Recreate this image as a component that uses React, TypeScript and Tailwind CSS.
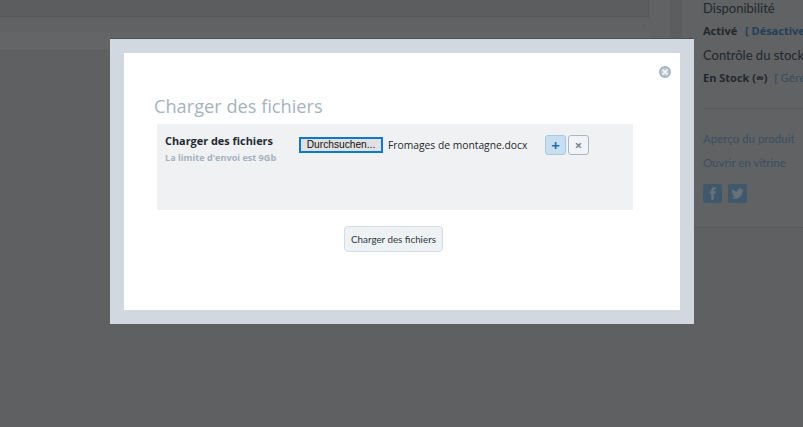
import React from 'react';

const sans = "font-['Open_Sans','Liberation_Sans',sans-serif]";
const narrow = "font-['Lato','Liberation_Sans',sans-serif]";

const ProductSide = () => (
  <aside className="flex h-[228px] w-[121px] flex-col overflow-hidden border-b border-dotted border-[#505254] bg-[#606264] pl-[21px] text-[#23282c]">
    <h4 className={`mt-[-1px] whitespace-nowrap text-[13px] leading-[19px] ${narrow}`}>Disponibilité</h4>
    <p className="mt-[5px] whitespace-nowrap text-[11px] font-bold leading-[16px]">
      Activé <span className="ml-[5px] text-[#243f57]">[ Désactiver ]</span>
    </p>
    <h4 className={`mt-[7px] whitespace-nowrap text-[13px] leading-[19px] ${narrow}`}>Contrôle du stock</h4>
    <p className="mt-[5px] whitespace-nowrap text-[11px] font-bold leading-[16px]">
      En Stock (∞) <span className="ml-[4px] font-normal text-[#2f4a61]">[ Gérer ]</span>
    </p>
    <div className="mt-[22px] border-t border-[#575a5c]" />
    <a className={`mt-[22px] whitespace-nowrap text-[11.500px] leading-[16px] text-[#3a5062] ${narrow}`}>Aperçu du produit</a>
    <a className={`mt-[8px] whitespace-nowrap text-[11.500px] leading-[16px] text-[#3a5062] ${narrow}`}>Ouvrir en vitrine</a>
    <div className="mt-[13px] flex gap-[6px]">
      <span className="flex h-[19px] w-[19px] items-center justify-center rounded-[2px] bg-[#3f586c]">
        <svg viewBox="0 0 24 24" className="h-[15px] w-[15px]" fill="#67717a" aria-hidden="true">
          <path d="M14 8.500V6.600c0-.9.6-1.100 1-1.100h2.500V2h-3.300C11 2 10 4.300 10 6.300v2.200H7.500V12H10v10h4V12h3l.5-3.500z" />
        </svg>
      </span>
      <span className="flex h-[19px] w-[19px] items-center justify-center rounded-[2px] bg-[#3f586c]">
        <svg viewBox="0 0 24 24" className="h-[15px] w-[15px]" fill="#67717a" aria-hidden="true">
          <path d="M22 5.900c-.7.300-1.500.5-2.400.6.900-.5 1.500-1.300 1.800-2.300-.8.500-1.700.8-2.600 1a4.100 4.100 0 0 0-7 3.700A11.600 11.600 0 0 1 3.400 4.700a4.100 4.100 0 0 0 1.300 5.500c-.7 0-1.300-.2-1.900-.5 0 2 1.400 3.700 3.300 4.100-.6.200-1.200.2-1.900.1.500 1.600 2 2.800 3.800 2.800A8.200 8.200 0 0 1 2 18.400 11.600 11.600 0 0 0 20 8.500c.8-.6 1.500-1.500 2-2.600z" />
        </svg>
      </span>
    </div>
  </aside>
);

const UploadDialog = () => (
  <div className="absolute left-[110px] top-[39px] h-[285px] w-[584px] bg-[#d1d8e0] p-[14px] shadow-[0_-1px_0_#4e5052]">
    <div className={`relative h-full bg-white pl-[30px] pt-[41px] ${sans}`}>
      <button
        type="button"
        className="absolute right-[9px] top-[13px] flex h-[12px] w-[12px] items-center justify-center rounded-full border-2 border-[#a8b4c0] bg-[#c3ccd5]"
        aria-label="Fermer"
      >
        <svg viewBox="0 0 8 8" className="h-[8px] w-[8px]" stroke="#f4f6f8" strokeWidth="1.600" aria-hidden="true">
          <path d="M1.500 1.500l5 5M6.500 1.500l-5 5" />
        </svg>
      </button>
      <h2 className="text-[18.200px] leading-[24px] text-[#a8b2bc]">Charger des fichiers</h2>
      <div className="ml-[3px] mt-[6px] flex h-[86px] w-[476px] bg-[#f0f1f3] pl-[8px] pt-[9px]">
        <div className="w-[134px]">
          <p className="whitespace-nowrap text-[10.900px] font-bold leading-[16px] text-[#1f2a33]">Charger des fichiers</p>
          <p className="mt-[1px] whitespace-nowrap text-[9.100px] font-bold leading-[15px] text-[#a5b3c0]">La limite d'envoi est 9Gb</p>
        </div>
        <div className="flex h-[24px] items-start pt-[4px]">
          <span className="flex h-[16px] w-[84px] items-center justify-center border-2 border-[#0a78d7] bg-[#e1e1e1] font-['Liberation_Sans',sans-serif] text-[10.200px] text-[#111]">
            Durchsuchen...
          </span>
          <span className="ml-[5px] w-[157px] whitespace-nowrap text-[10.300px] leading-[16px] text-[#23282c]">Fromages de montagne.docx</span>
        </div>
        <div className="flex gap-[2px] pt-[2px]">
          <button type="button" className="flex h-[20px] w-[21px] items-center justify-center rounded-[3px] border border-[#a9c8e0] bg-[#c7dff1] text-[15px] font-bold leading-none text-[#1a6fb5]">
            +
          </button>
          <button type="button" className="flex h-[20px] w-[21px] items-center justify-center rounded-[3px] border border-[#a9b6c3] bg-[#f1f3f6] text-[13px] font-bold leading-none text-[#78848f]">
            ×
          </button>
        </div>
      </div>
      <div className="ml-[190px] mt-[15px]">
        <button type="button" className={`h-[26px] w-[99px] whitespace-nowrap rounded-[4px] border border-[#d3dde7] bg-[#eff2f5] text-[9.800px] text-[#2c3640] ${narrow}`}>
          Charger des fichiers
        </button>
      </div>
    </div>
  </div>
);

export default function App() {
  return (
    <div className={`relative flex h-[427px] w-[803px] items-start overflow-hidden bg-[#5f6062] ${sans}`}>
      <main className="w-[649px]">
        <div className="h-[17px] border-r border-b border-dotted border-[#525355] bg-[#5c5d5f]" />
        <div className="flex h-[15px] items-center justify-end bg-[#616264] pr-[4px] text-[10px] leading-none text-[#4c5a66]">›</div>
        <div className="h-[19px] border-b border-dotted border-[#525355] bg-[#646567]" />
      </main>
      <div className="h-[39px] w-[21px] bg-[#616264]" />
      <div className="h-[39px] w-[12px] border-x border-dotted border-[#56585a] bg-[#5c5d5f]" />
      <ProductSide />
      <UploadDialog />
    </div>
  );
}
